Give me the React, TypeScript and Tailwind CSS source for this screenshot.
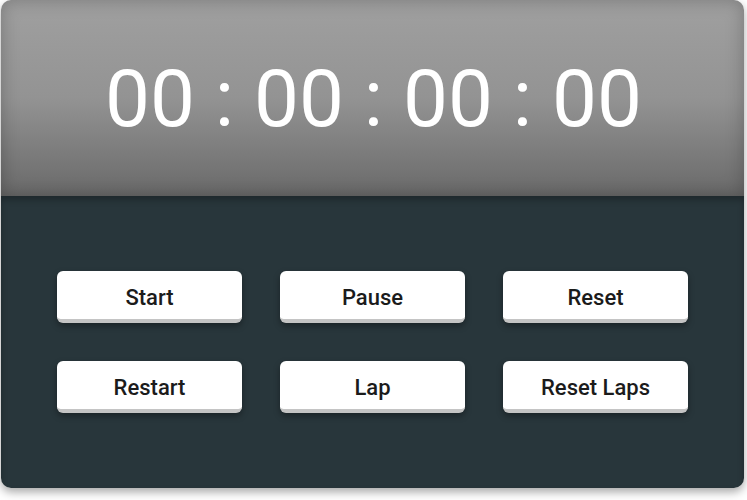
export default function App() {
  const buttons = ["Start", "Pause", "Reset", "Restart", "Lap", "Reset Laps"];

  return (
    <div className="w-[747px] h-[500px] bg-white pl-[1px] pr-[3px] pb-[12px]">
      <div className="h-full rounded-[10px] overflow-hidden flex flex-col shadow-[0_4px_10px_rgba(0,0,0,0.35)] font-['Roboto',sans-serif]">
        {/* display */}
        <div className="h-[196px] shrink-0 flex items-center justify-center bg-gradient-to-b from-[#a0a0a0] via-[#939393] to-[#6a6a6a] shadow-[inset_0_0_18px_rgba(0,0,0,0.25)]">
          <div className="text-white text-[80px] font-normal leading-none mt-[2px] ml-[2px]">
            00 : 00 : 00 : 00
          </div>
        </div>

        {/* controls */}
        <div className="flex-1 bg-[#28363b] px-[56px] pt-[75px] shadow-[inset_0_4px_6px_rgba(0,0,0,0.25)]">
          <div className="grid grid-cols-3 gap-x-[38px] gap-y-[38px]">
            {buttons.map((b) => (
              <button
                key={b}
                className="h-[52px] bg-white rounded-[6px] border-b-[4px] border-[#c4c4c4] shadow-[0_3px_6px_rgba(0,0,0,0.35)] text-[22px] font-medium text-[#1b1b1b] pt-[4px]"
              >
                {b}
              </button>
            ))}
          </div>
        </div>
      </div>
    </div>
  );
}
